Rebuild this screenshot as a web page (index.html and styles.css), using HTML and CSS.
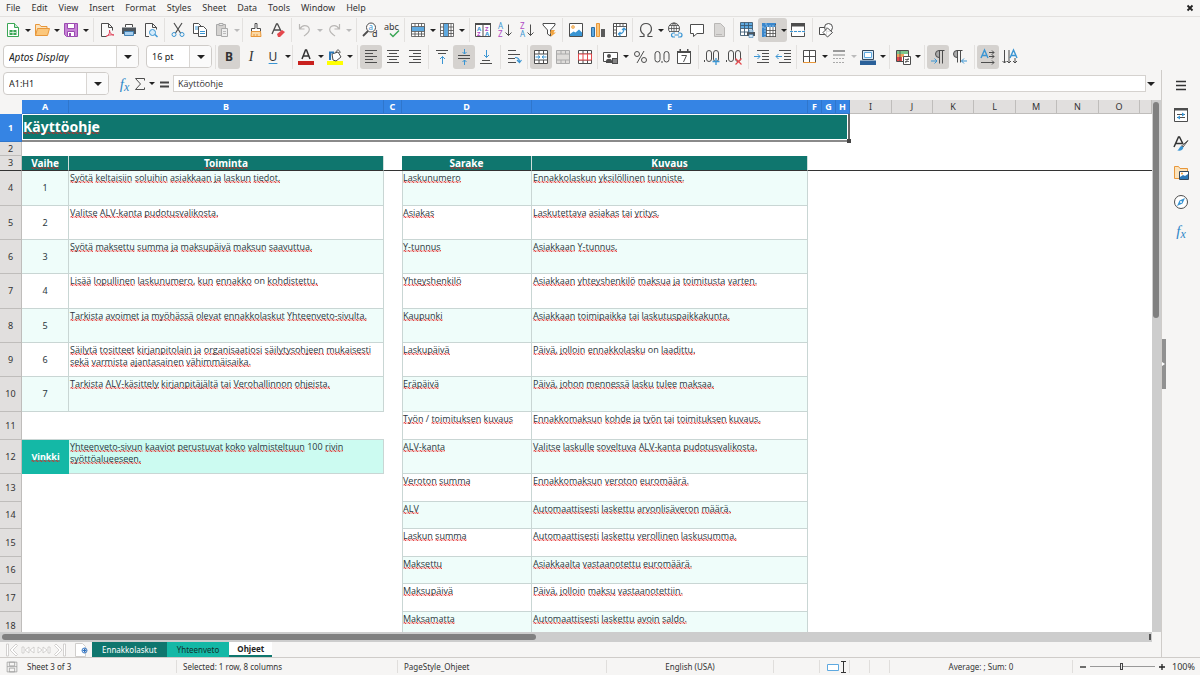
FILE: index.html
```html
<!DOCTYPE html>
<html lang="en">
<head>
<meta charset="utf-8">
<title>Ohjeet</title>
<link rel="stylesheet" href="styles.css">
</head>
<body>
<nav class="menubar">
  <button>File</button><button>Edit</button><button>View</button><button>Insert</button><button>Format</button><button>Styles</button><button>Sheet</button><button>Data</button><button>Tools</button><button>Window</button><button>Help</button>
  <button class="close" aria-label="Close document"><svg viewBox="0 0 8 8"><path d="M1.5 1.5l5 5M6.500 1.500l-5 5" stroke="#222" stroke-width="1.8"/></svg></button>
</nav>

<div class="toolbar standard" role="toolbar" aria-label="Standard">
  <div class="group">
    <button aria-label="New"><svg class="i" viewBox="0 0 16 16"><path d="M2.500 1.500h7l4 4v9h-11z" fill="#fff" stroke="#3aa655"/><path d="M9.500 1.500v4h4" fill="#c8ecd0" stroke="#3aa655"/><path d="M4.500 8h7v5h-7z" fill="#3aa655"/><path d="M5 10.500h6M8 8v5" stroke="#fff" stroke-width=".7"/></svg></button><button class="drop" aria-label="New options"></button>
    <button aria-label="Open"><svg class="i" viewBox="0 0 16 16"><path d="M1.500 13.500v-11h4l1.500 2h6v2" fill="#fbe3bd" stroke="#e8973a"/><path d="M1.500 13.500l2-7h12l-2 7z" fill="#fbc77c" stroke="#e8973a"/></svg></button><button class="drop" aria-label="Open options"></button>
    <button aria-label="Save"><svg class="i" viewBox="0 0 16 16"><path d="M1.500 1.500h13v13h-11l-2-2z" fill="#c783d6" stroke="#9b4bb0"/><path d="M4.500 1.500h7v5h-7zM4.500 9.500h7v5h-7z" fill="#fff" stroke="#9b4bb0"/><path d="M6 11h2v3H6z" fill="#9b4bb0"/></svg></button><button class="drop" aria-label="Save options"></button>
  </div>
  <div class="group">
    <button aria-label="Export as PDF"><svg class="i" viewBox="0 0 16 16"><path d="M7 14.500H2.500v-13h7l4 4v3M9.500 1.500v4h4" fill="#fafafa" stroke="#4d4d4d"/><path d="M7 14.500c3-1 4-4 3.500-6.500 0 3 2 5 4.500 5-3-.5-6 0-8 1.500z" fill="none" stroke="#e0455c"/></svg></button>
    <button aria-label="Print"><svg class="i" viewBox="0 0 16 16"><path d="M4.500 5V2.500h7V5" fill="#fff" stroke="#4d4d4d"/><path d="M1 5.500h14v6.500H1z" fill="#4d555c"/><path d="M3.500 9.500h9v4h-9z" fill="#a8d0f0" stroke="#4482b4"/></svg></button>
    <button aria-label="Print preview"><svg class="i" viewBox="0 0 16 16"><path d="M6 14.500H2.500v-13h7l4 4v2M9.500 1.500v4h4" fill="#fafafa" stroke="#4d4d4d"/><circle cx="9.500" cy="10.500" r="3" fill="#d5ebfa" stroke="#3a95d3"/><path d="M12 12.500l2.500 2.500" stroke="#3a95d3" stroke-width="1.400"/></svg></button>
  </div>
  <div class="group">
    <button aria-label="Cut"><svg class="i" viewBox="0 0 16 16"><path d="M4 1l6.500 10M12 1L5.500 11" fill="none" stroke="#4d4d4d" stroke-width="1.200"/><circle cx="4" cy="12.500" r="2" fill="none" stroke="#3a95d3"/><circle cx="12" cy="12.500" r="2" fill="none" stroke="#3a95d3"/></svg></button>
    <button aria-label="Copy"><svg class="i" viewBox="0 0 16 16"><path d="M1.500 1.500h5l3 3v7h-8z" fill="#fff" stroke="#4d4d4d"/><path d="M6.500 4.500h5l3 3v7h-8z" fill="#fff" stroke="#4d4d4d"/><path d="M3 5h3M3 7h3M8 9.500h5M8 11.500h5" stroke="#3a95d3"/></svg></button>
    <button class="off" disabled aria-label="Paste"><svg class="i" viewBox="0 0 16 16"><path d="M2.500 2.500h9v11h-9z" fill="#d4d2d0" stroke="#aaa"/><path d="M5 1.500h4v2H5z" fill="#eee" stroke="#aaa"/><path d="M7.500 6.500h6v8h-6z" fill="#eee" stroke="#aaa"/><path d="M9 9.500h3M9 11.500h3" stroke="#bbb"/></svg></button><button class="drop off" disabled aria-label="Paste options"></button>
  </div>
  <div class="group">
    <button aria-label="Clone formatting"><svg class="i" viewBox="0 0 16 16"><path d="M7 1.500h2v5h3.500v3h-9v-3H7z" fill="#fff" stroke="#4d4d4d"/><path d="M3.500 9.500h9l.5 5h-10z" fill="#fbd9a6" stroke="#e8973a"/><path d="M6 12v2M9 12v2" stroke="#e8973a"/></svg></button>
    <button aria-label="Clear formatting"><svg class="i" viewBox="0 0 16 16"><path d="M2 12L6.500 2h1L11 9M4 8h6" fill="none" stroke="#4d4d4d" stroke-width="1.300"/><path d="M7 12l5-4 3 2-5 5H8z" fill="#e5484d"/></svg></button>
  </div>
  <div class="group">
    <button class="off" disabled aria-label="Undo"><svg class="i" viewBox="0 0 16 16"><path d="M2.500 2v5h5M3 7c3-6 11-3 9 2-.7 2-2 2.500-5 5" fill="none" stroke="#b9b7b5" stroke-width="1.200"/></svg></button><button class="drop off" disabled aria-label="Undo options"></button>
    <button class="off" disabled aria-label="Redo"><svg class="i" viewBox="0 0 16 16"><path d="M13.500 2v5h-5M13 7C10 1 2 4 4 9c.7 2 2 2.500 5 5" fill="none" stroke="#b9b7b5" stroke-width="1.200"/></svg></button><button class="drop off" disabled aria-label="Redo options"></button>
  </div>
  <div class="group">
    <button aria-label="Find and replace"><svg class="i" viewBox="0 0 16 16"><circle cx="9" cy="5.500" r="4.500" fill="#fff" stroke="#4d4d4d"/><path d="M6 9l-5 5" stroke="#4d4d4d" stroke-width="1.800"/><text x="6.500" y="8" font-size="8" fill="#3a95d3">a</text><text x="10" y="15" font-size="9" fill="#333">d</text></svg></button>
    <button aria-label="Spelling"><svg class="i" viewBox="0 0 16 16"><text x="0" y="8" font-size="9" fill="#333">abc</text><path d="M6 11.500l3 3 6-6" fill="none" stroke="#3aa655" stroke-width="1.500"/></svg></button>
  </div>
  <div class="group">
    <button aria-label="Row"><svg class="i" viewBox="0 0 16 16"><path d="M1.500 1.500h13v13h-13z" fill="#fff"/><path d="M1 5h14v4H1z" fill="#5ea9e0"/><path d="M1.500 1.500h13v13h-13zM1.500 4.500h13M1.500 9.500h13M1.500 12h13M5 1.500v3M8.500 1.500v3M11.500 1.500v3M5 9.500v5M8.500 9.500v5M11.500 9.500v5" fill="none" stroke="#4d4d4d" stroke-width=".8"/></svg></button><button class="drop" aria-label="Row options"></button>
    <button aria-label="Column"><svg class="i" viewBox="0 0 16 16"><path d="M1.500 1.500h13v13h-13z" fill="#fff"/><path d="M5 1h4v14H5z" fill="#5ea9e0"/><path d="M1.500 1.500h13v13h-13zM4.500 1.500v13M9.500 1.500v13M12 1.500v13M1.500 5h3M1.500 8.500h3M1.500 11.500h3M9.500 5h5M9.500 8.500h5M9.500 11.500h5" fill="none" stroke="#4d4d4d" stroke-width=".8"/></svg></button><button class="drop" aria-label="Column options"></button>
  </div>
  <div class="group">
    <button aria-label="Sort"><svg class="i" viewBox="0 0 16 16"><path d="M.500 1.500h15v13H.500z" fill="#fff" stroke="#4d4d4d"/><path d="M0 1h16v2H0zM7.500 3h1v12h-1z" fill="#4d4d4d"/><g font-size="6" font-weight="bold"><text x="2" y="8.500" fill="#3a95d3">A</text><text x="2" y="14" fill="#b04bc4">Z</text><text x="10" y="8.500" fill="#b04bc4">Z</text><text x="10" y="14" fill="#3a95d3">A</text></g></svg></button>
    <button aria-label="Sort ascending"><svg class="i" viewBox="0 0 16 16"><text x="1" y="7" font-size="8" fill="#3a95d3">A</text><text x="1" y="15" font-size="8" fill="#b04bc4">Z</text><path d="M11.500 2.500v11M8.500 10.500l3 3 3-3" fill="none" stroke="#4d4d4d"/></svg></button>
    <button aria-label="Sort descending"><svg class="i" viewBox="0 0 16 16"><text x="1" y="7" font-size="8" fill="#b04bc4">Z</text><text x="1" y="15" font-size="8" fill="#3a95d3">A</text><path d="M11.500 2.500v11M8.500 10.500l3 3 3-3" fill="none" stroke="#4d4d4d"/></svg></button>
    <button aria-label="AutoFilter"><svg class="i" viewBox="0 0 16 16"><path d="M2 1.500h12v1.500L9.500 8v6l-3-2V8L2 3z" fill="#fff" stroke="#4d4d4d"/><path d="M10 8h4l-1.500 2.500H15L9.500 15l1-3.500H9z" fill="#f2a33c"/></svg></button>
  </div>
  <div class="group">
    <button aria-label="Image"><svg class="i" viewBox="0 0 16 16"><path d="M1.500 1.500h13v13h-13z" fill="#fff" stroke="#4d4d4d"/><circle cx="5" cy="5" r="1.500" fill="#fbc77c" stroke="#e8973a" stroke-width=".6"/><path d="M2 14v-2l3.500-2.500 2 1L11 7.500l3 3V14z" fill="#3a95d3"/></svg></button>
    <button aria-label="Chart"><svg class="i" viewBox="0 0 16 16"><path d="M1.500 5.500h3v9h-3z" fill="#5ea9e0" stroke="#2d6da3"/><path d="M6.500 1.500h3v13h-3z" fill="#fbc77c" stroke="#e8973a"/><path d="M11 7h4v8h-4z" fill="#5a5a5a"/></svg></button>
    <button aria-label="Pivot table"><svg class="i" viewBox="0 0 16 16"><path d="M1.500 1.500h13v13h-13z" fill="#fff" stroke="#4d4d4d"/><path d="M4.500 4.500v10M4.500 4.500h10M8 1.500v3M11 1.500v3M1.500 8h3M1.500 11h3M4.500 1.500v3M1.500 4.500h3" fill="none" stroke="#4d4d4d" stroke-width=".9"/><path d="M6.500 12c4 0 5.500-2 5.500-5.500M10 8l2-2 2 2M8.500 10l-2 2 2 2" fill="none" stroke="#3a95d3" stroke-width="1.200"/></svg></button>
  </div>
  <div class="group">
    <button aria-label="Special character"><svg class="i" viewBox="0 0 16 16"><path d="M1.500 14.500h4.500v-2C.500 9 2 1.500 8 1.500s7.500 7.500 2 11v2h4.500" fill="none" stroke="#4d4d4d" stroke-width="1.200"/></svg></button><button class="drop" aria-label="Special character options"></button>
    <button aria-label="Hyperlink"><svg class="i" viewBox="0 0 16 16"><circle cx="7" cy="6.500" r="5.500" fill="#fff" stroke="#4d4d4d"/><path d="M1.500 6.500h11M2.500 3.500h9M2.500 9.500h9M7 1v11" stroke="#4d4d4d" stroke-width=".8"/><ellipse cx="7" cy="6.500" rx="2.500" ry="5.500" fill="none" stroke="#4d4d4d" stroke-width=".8"/><rect x="3" y="10" width="13" height="6" fill="#f6f5f4"/><path d="M8 11H6.500a2 2 0 000 4H8M11 11h2a2 2 0 010 4h-2M7.500 13h4.500" fill="none" stroke="#3a95d3" stroke-width="1.200"/></svg></button>
    <button aria-label="Comment"><svg class="i" viewBox="0 0 16 16"><path d="M1.500 2.500h13v9H8l-3.500 3v-3h-3z" fill="#fff" stroke="#4d4d4d"/></svg></button>
    <button class="off" disabled aria-label="Headers and footers"><svg class="i" viewBox="0 0 16 16"><path d="M3.500 1.500h6l4 4v9h-10z" fill="#d9d7d5" stroke="#b9b7b5"/><path d="M5 12.500h6" stroke="#b9b7b5"/></svg></button>
  </div>
  <div class="group">
    <button aria-label="Print area"><svg class="i" viewBox="0 0 16 16"><path d="M1.500.500h12v13h-12z" fill="#fff"/><path d="M2 1h11v5H2z" fill="#5ea9e0"/><path d="M1.500.500h12v13h-12zM1.500 3.500h12M1.500 6.500h12M1.500 10h12M5.500.500v13M9.500.500v13" fill="none" stroke="#3c5a73" stroke-width=".9"/><path d="M8 10h8v4H8z" fill="#4d555c"/><path d="M10 8h4v2h-4zM10 12.500h4v3h-4z" fill="#cfe5f6" stroke="#4482b4" stroke-width=".6"/></svg></button>
    <span class="split on"><button aria-label="Freeze rows and columns"><svg class="i" viewBox="0 0 16 16"><path d="M1.500 1.500h13v13h-13z" fill="#fff"/><path d="M1 1h14v4H5.500v10H1z" fill="#3a87cc"/><path d="M5.500 5v10M9 5v10M12 5v10M5 8.500h10M5 11.500h10M5 14.500h10M14.500 2v13" stroke="#4d4d4d" stroke-width=".8"/><path d="M5 1v3h10M1 5h3v10" fill="none" stroke="#b7d9f3" stroke-width=".7" stroke-dasharray="2 1"/></svg></button><button class="drop" aria-label="Freeze options"></button></span>
    <button aria-label="Split window"><svg class="i" viewBox="0 0 16 16"><path d="M1.500 1.500h13v13h-13z" fill="#fff" stroke="#4d4d4d"/><path d="M1 1h14v3.500H1z" fill="#4d4d4d"/><path d="M0 9.500h16" stroke="#f6f5f4" stroke-width="2"/><path d="M0 9.500h16" stroke="#3a95d3" stroke-dasharray="3 1"/></svg></button>
  </div>
  <div class="group">
    <button aria-label="Show draw functions"><svg class="i" viewBox="0 0 16 16"><path d="M1.500 5.500h7v7h-7z" fill="#fff" stroke="#4d4d4d"/><circle cx="10.500" cy="5.500" r="4" fill="#fff" fill-opacity=".7" stroke="#4d4d4d"/><path d="M9.500 6l5 4.500-5 4.500L5 10.500z" fill="#fff" fill-opacity=".8" stroke="#4d4d4d"/></svg></button>
  </div>
</div>

<div class="toolbar formatting" role="toolbar" aria-label="Formatting">
  <div class="combos">
    <div class="combo font"><input type="text" value="Aptos Display" aria-label="Font name"><button class="drop" aria-label="Font list"></button></div>
    <div class="combo size"><input type="text" value="16 pt" aria-label="Font size"><button class="drop" aria-label="Size list"></button></div>
  </div>
  <div class="group">
    <button class="on letter bold">B</button><button class="letter italic">I</button><button class="letter under">U</button><button class="drop" aria-label="Underline options"></button>
  </div>
  <div class="group">
    <button aria-label="Font color"><svg class="i" viewBox="0 0 16 16"><path d="M4 10L7.500 1h1L12 10M5.500 7h5" fill="none" stroke="#333" stroke-width="1.500"/><path d="M0 12h16v4H0z" fill="#c9211e"/></svg></button><button class="drop" aria-label="Font color options"></button>
    <button aria-label="Highlighting color"><svg class="i" viewBox="0 0 16 16"><path d="M0 12h16v4H0z" fill="#ff0"/><path d="M5 5l6-2 3 5-5 4-3-1z" fill="#fff" stroke="#4d4d4d"/><path d="M9 4c0-4 4-4 4 0" fill="none" stroke="#4d4d4d"/><path d="M3 11V3.500H7" fill="none" stroke="#2d79b8" stroke-width="2"/></svg></button><button class="drop" aria-label="Highlighting options"></button>
  </div>
  <div class="group">
    <button class="on" aria-label="Align left"><svg class="i" viewBox="0 0 16 16"><path d="M2 1.500h12M2 4.500h8M2 7.500h12M2 10.500h8M2 13.500h12" stroke="#4d4d4d"/></svg></button>
    <button aria-label="Center horizontally"><svg class="i" viewBox="0 0 16 16"><path d="M2 1.500h12M4 4.500h8M2 7.500h12M4 10.500h8M2 13.500h12" stroke="#4d4d4d"/></svg></button>
    <button aria-label="Align right"><svg class="i" viewBox="0 0 16 16"><path d="M2 1.500h12M6 4.500h8M2 7.500h12M6 10.500h8M2 13.500h12" stroke="#4d4d4d"/></svg></button>
  </div>
  <div class="group">
    <button aria-label="Align top"><svg class="i" viewBox="0 0 16 16"><path d="M2 1.500h12M4 4.500h8" stroke="#4d4d4d"/><path d="M8.500 15V7.500M6 10l2.500-2.500L11 10" fill="none" stroke="#3a95d3"/></svg></button>
    <button class="on" aria-label="Center vertically"><svg class="i" viewBox="0 0 16 16"><path d="M2 6.500h12M2 9.500h12" stroke="#4d4d4d"/><path d="M8.500 0v5M6.500 3l2 2 2-2M8.500 16v-5M6.500 13l2-2 2 2" fill="none" stroke="#3a95d3"/></svg></button>
    <button aria-label="Align bottom"><svg class="i" viewBox="0 0 16 16"><path d="M4 11.500h8M2 14.500h12" stroke="#4d4d4d"/><path d="M8.500 1v7.500M6 6l2.500 2.500L11 6" fill="none" stroke="#3a95d3"/></svg></button>
  </div>
  <div class="group">
    <button aria-label="Wrap text"><svg class="i" viewBox="0 0 16 16"><path d="M2 1.500h8M2 5.500h12M2 9.500h7M2 13.500h8" stroke="#4d4d4d"/><path d="M9 8.500c3 0 4.500 1.500 4.500 4.500M11 11l2.500 2.500L15.500 11" fill="none" stroke="#3a95d3" stroke-width="1.200"/></svg></button>
  </div>
  <div class="group">
    <button class="on" aria-label="Merge and center cells"><svg class="i" viewBox="0 0 16 16"><path d="M1.500 1.500h13v13h-13z" fill="#fff" stroke="#4d4d4d"/><path d="M1.500 5h13M1.500 11h13M6 1.500V5M10.500 1.500V5M6 11v3.500M10.500 11v3.500" stroke="#4d4d4d"/><path d="M2.500 8h4.500M9 8h4.500M5 6.500L7 8 5 9.500M11 6.500L9 8l2 1.500" fill="none" stroke="#3a95d3"/></svg></button>
    <button class="off" disabled aria-label="Merge cells"><svg class="i" viewBox="0 0 16 16"><path d="M1.500 1.500h13v13h-13zM1.500 5h13M1.500 11h13M6 1.500V5M10.500 1.500V5M6 11v3.500M10.500 11v3.500" fill="#dedcda" stroke="#aaa"/></svg></button>
    <button aria-label="Unmerge cells"><svg class="i" viewBox="0 0 16 16"><path d="M1.500 1.500h13v13h-13zM1.500 5h13M1.500 11h13M6 1.500V5M10.500 1.500V5M6 11v3.500M10.500 11v3.500" fill="#fff" stroke="#4d4d4d"/><path d="M1.500 5h13v6h-13zM6 5v6M10.500 5v6" fill="#fff" stroke="#e5484d"/></svg></button>
  </div>
  <div class="group">
    <button aria-label="Format as currency"><svg class="i" viewBox="0 0 16 16"><path d="M.500 3.500h14v9H.500z" fill="#fff" stroke="#4d4d4d"/><circle cx="6" cy="7" r="2" fill="#4d4d4d"/><path d="M3 12c0-3 6-3 6 0v2H3zM9 9h6v6H9z" fill="#4d4d4d"/><path d="M10 11h4M10 13h4" stroke="#eee" stroke-width=".7"/></svg></button><button class="drop" aria-label="Currency options"></button>
    <button aria-label="Format as percent"><svg class="i" viewBox="0 0 16 16"><circle cx="5" cy="5" r="2.500" fill="none" stroke="#4d4d4d"/><circle cx="12" cy="11" r="2.500" fill="none" stroke="#4d4d4d"/><path d="M12 2L5 14" stroke="#4d4d4d"/></svg></button>
    <button aria-label="Format as number"><svg class="i" viewBox="0 0 16 16"><rect x="1" y="2.500" width="5" height="10.500" rx="2.500" fill="none" stroke="#4d4d4d"/><rect x="10" y="2.500" width="5" height="10.500" rx="2.500" fill="none" stroke="#4d4d4d"/><path d="M8 12v2" stroke="#4d4d4d"/></svg></button>
    <button aria-label="Format as date"><svg class="i" viewBox="0 0 16 16"><path d="M1.500 2.500h13v12h-13z" fill="#fff" stroke="#4d4d4d"/><path d="M1 2h14v2H1zM3.500 0h1.500v4H3.500zM11 0h1.500v4H11z" fill="#4d4d4d"/><path d="M5.500 6.500h5l-3 6.500" fill="none" stroke="#4d4d4d"/></svg></button>
  </div>
  <div class="group">
    <button aria-label="Add decimal place"><svg class="i" viewBox="0 0 16 16"><rect x="2.500" y="1.500" width="5" height="11" rx="2.500" fill="none" stroke="#4d4d4d"/><rect x="9.500" y="1.500" width="5" height="11" rx="2.500" fill="none" stroke="#4d4d4d"/><path d="M.500 11v2" stroke="#4d4d4d"/><path d="M12 9v7M8.500 12.500h7" stroke="#3a95d3" stroke-width="1.300"/></svg></button>
    <button aria-label="Delete decimal place"><svg class="i" viewBox="0 0 16 16"><rect x="2.500" y="1.500" width="5" height="11" rx="2.500" fill="none" stroke="#4d4d4d"/><rect x="9.500" y="1.500" width="5" height="11" rx="2.500" fill="none" stroke="#4d4d4d"/><path d="M.500 11v2" stroke="#4d4d4d"/><path d="M9.500 9.500l6 6M15.500 9.500l-6 6" stroke="#e5484d" stroke-width="1.200"/></svg></button>
  </div>
  <div class="group">
    <button aria-label="Increase indent"><svg class="i" viewBox="0 0 16 16"><path d="M3 1.500h12M8 4.500h7M8 7.500h7M8 10.500h7M3 13.500h12" stroke="#4d4d4d"/><path d="M0 7.500h6M3.500 5L6 7.500 3.500 10" fill="none" stroke="#3a95d3"/></svg></button>
    <button aria-label="Decrease indent"><svg class="i" viewBox="0 0 16 16"><path d="M3 1.500h12M8 4.500h7M8 7.500h7M8 10.500h7M3 13.500h12" stroke="#4d4d4d"/><path d="M6 7.500H0M2.500 5L0 7.500 2.500 10" fill="none" stroke="#3a95d3"/></svg></button>
  </div>
  <div class="group">
    <button aria-label="Borders"><svg class="i" viewBox="0 0 16 16"><path d="M1.500 1.500h12v12h-12z" fill="#fff" stroke="#4d4d4d"/><path d="M7.500 2v11M2 7.500h11" stroke="#4d4d4d"/><path d="M1 13.500h13" stroke="#e8973a"/></svg></button><button class="drop" aria-label="Borders options"></button>
    <button class="off" disabled aria-label="Border style"><svg class="i" viewBox="0 0 16 16"><path d="M2 2h12" stroke="#999" stroke-width="2"/><path d="M2 6h12" stroke="#aaa" stroke-width="1.500"/><path d="M2 9.500h12M2 13.500h12" stroke="#aaa" stroke-dasharray="2 1"/></svg></button><button class="drop off" disabled aria-label="Border style options"></button>
    <button aria-label="Border color"><svg class="i" viewBox="0 0 16 16"><path d="M2.500 1.500h11v9h-11z" fill="#d9ebf9" stroke="#34495e"/><path d="M4.500 3.500h7v5h-7z" fill="#fff" stroke="#5ea9e0"/><path d="M0 11.500h16V16H0z" fill="#2a6099"/></svg></button><button class="drop" aria-label="Border color options"></button>
  </div>
  <div class="group">
    <button aria-label="Conditional formatting"><svg class="i" viewBox="0 0 16 16"><path d="M1.500 1.500h12v11h-12z" fill="#fff" stroke="#4d4d4d"/><path d="M2 2h11v3H2z" fill="#7cc68d"/><path d="M2 5h7v3H2z" fill="#f0a35e"/><path d="M2 8h5v4H2z" fill="#e5484d"/><path d="M5 2v10" stroke="#4d4d4d" stroke-width=".8"/><path d="M8.500 7.500h7v8h-7z" fill="#fff" stroke="#4d4d4d"/><path d="M10 10.500h4M10 12.500h4M13.500 9l-3 5" stroke="#4d4d4d" stroke-width=".8"/></svg></button><button class="drop" aria-label="Conditional options"></button>
  </div>
  <div class="group">
    <button class="on" aria-label="Left-to-right"><svg class="i" viewBox="0 0 16 16"><path d="M9 1.500a3.500 3.500 0 000 7z" fill="#aaa"/><path d="M14.500 1.500H9a3.500 3.500 0 000 7M9.500 1.500v13M12.500 1.500v13" fill="none" stroke="#4d4d4d"/><path d="M1 12h6M4.500 9.500L7 12l-2.500 2.500" fill="none" stroke="#3a95d3"/></svg></button>
    <button aria-label="Right-to-left"><svg class="i" viewBox="0 0 16 16"><path d="M5 1.500a3.500 3.500 0 000 7z" fill="#aaa"/><path d="M10.500 1.500H5a3.500 3.500 0 000 7M5.500 1.500v12M8.500 1.500v12" fill="none" stroke="#4d4d4d"/><path d="M15 12H9.500M12 9.500L9.500 12l2.500 2.500" fill="none" stroke="#3a95d3"/></svg></button>
  </div>
  <div class="group">
    <button class="on" aria-label="Text direction left to right"><svg class="i" viewBox="0 0 16 16"><path d="M1 9L4.500 1 8 9M2 6.500h5" fill="none" stroke="#3a95d3" stroke-width="1.400"/><path d="M9 3.500h5M12 1.500l2 2-2 2M9 7.500h5M12 5.500l2 2-2 2M1 13.500h13M12 11.500l2 2-2 2" fill="none" stroke="#4d4d4d"/></svg></button>
    <button aria-label="Text direction top to bottom"><svg class="i" viewBox="0 0 16 16"><path d="M8 9l3.500-8L15 9M9 6.500h5" fill="none" stroke="#3a95d3" stroke-width="1.400"/><path d="M2.500 1v13M.500 12l2 2 2-2M7 1v13M5 12l2 2 2-2M13 9v5M11 12l2 2 2-2" fill="none" stroke="#4d4d4d"/></svg></button>
  </div>
</div>

<div class="workspace">
  <main class="document">
    <div class="formulabar">
      <div class="combo name"><input type="text" value="A1:H1" aria-label="Name box"><button class="drop" aria-label="Named ranges"></button></div>
      <div class="fxtools">
        <button class="fx" aria-label="Function wizard">f<sub>x</sub></button>
        <button aria-label="Select function"><svg class="i" viewBox="0 0 16 16"><path d="M12.500 4.500v-2h-9l5 5.500-5 5.500h9v-2" fill="none" stroke="#4d4d4d"/></svg></button><button class="drop" aria-label="Select function options"></button>
        <button aria-label="Formula"><svg class="i" viewBox="0 0 16 16"><path d="M4 6.500h9M4 10.500h9" stroke="#444" stroke-width="2"/></svg></button>
      </div>
      <input class="formula" type="text" value="Käyttöohje" aria-label="Input line">
      <button class="drop big" aria-label="Expand formula bar"></button>
    </div>

    <div class="gridarea">
      <div class="sheet">
        <table>
          <colgroup><col class="rh"><col class="a"><col class="b"><col class="c"><col class="d"><col class="e"><col class="s"><col class="s"><col class="s"><col class="w wide"><col class="w"><col class="w"><col class="w wide"><col class="w"><col class="w wide"><col class="w"><col></colgroup>
          <thead>
            <tr class="cols"><th class="corner"></th><th class="sel">A</th><th class="sel">B</th><th class="sel">C</th><th class="sel">D</th><th class="sel">E</th><th class="sel">F</th><th class="sel">G</th><th class="sel">H</th><th>I</th><th>J</th><th>K</th><th>L</th><th>M</th><th>N</th><th>O</th><th></th></tr>
          </thead>
          <tbody>
            <tr class="h28"><th class="sel">1</th><td class="title" colspan="8"><span class="spell">Käyttöohje</span><i class="handle"></i></td><td colspan="8"></td></tr>
            <tr class="h14"><th>2</th><td colspan="16"></td></tr>
            <tr class="h15 freeze"><th>3</th><td class="head spell">Vaihe</td><td class="head spell">Toiminta</td><td></td><td class="head spell">Sarake</td><td class="head spell">Kuvaus</td><td colspan="11"></td></tr>
            <tr class="h35 alt"><th>4</th><td class="num">1</td><td class="txt">Syötä keltaisiin soluihin asiakkaan ja laskun tiedot.</td><td></td><td class="txt first">Laskunumero</td><td class="txt">Ennakkolaskun yksilöllinen tunniste.</td></tr>
            <tr class="h34"><th>5</th><td class="num">2</td><td class="txt">Valitse ALV-kanta pudotusvalikosta.</td><td></td><td class="txt first">Asiakas</td><td class="txt">Laskutettava asiakas tai yritys.</td></tr>
            <tr class="h34 alt"><th>6</th><td class="num">3</td><td class="txt">Syötä maksettu summa ja maksupäivä maksun saavuttua.</td><td></td><td class="txt first">Y-tunnus</td><td class="txt">Asiakkaan Y-tunnus.</td></tr>
            <tr class="h35"><th>7</th><td class="num">4</td><td class="txt">Lisää lopullinen laskunumero, kun ennakko on kohdistettu.</td><td></td><td class="txt first">Yhteyshenkilö</td><td class="txt">Asiakkaan yhteyshenkilö maksua ja toimitusta varten.</td></tr>
            <tr class="h34 alt"><th>8</th><td class="num">5</td><td class="txt">Tarkista avoimet ja myöhässä olevat ennakkolaskut Yhteenveto-sivulta.</td><td></td><td class="txt first">Kaupunki</td><td class="txt">Asiakkaan toimipaikka tai laskutuspaikkakunta.</td></tr>
            <tr class="h34"><th>9</th><td class="num">6</td><td class="txt">Säilytä tositteet kirjanpitolain ja organisaatiosi säilytysohjeen mukaisesti sekä varmista ajantasainen vähimmäisaika.</td><td></td><td class="txt first">Laskupäivä</td><td class="txt">Päivä, jolloin ennakkolasku on laadittu.</td></tr>
            <tr class="h35 alt"><th>10</th><td class="num">7</td><td class="txt">Tarkista ALV-käsittely kirjanpitäjältä tai Verohallinnon ohjeista.</td><td></td><td class="txt first">Eräpäivä</td><td class="txt">Päivä, johon mennessä lasku tulee maksaa.</td></tr>
            <tr class="h28"><th>11</th><td class="over"></td><td class="over"></td><td></td><td class="txt first">Työn / toimituksen kuvaus</td><td class="txt">Ennakkomaksun kohde ja työn tai toimituksen kuvaus.</td></tr>
            <tr class="h34 alt"><th>12</th><td class="tip spell">Vinkki</td><td class="txt tiptext">Yhteenveto-sivun kaaviot perustuvat koko valmisteltuun 100 rivin syöttöalueeseen.</td><td></td><td class="txt first">ALV-kanta</td><td class="txt">Valitse laskulle soveltuva ALV-kanta pudotusvalikosta.</td></tr>
            <tr class="h28"><th>13</th><td colspan="3"></td><td class="txt first">Veroton summa</td><td class="txt">Ennakkomaksun veroton euromäärä.</td></tr>
            <tr class="h27 alt"><th>14</th><td colspan="3"></td><td class="txt first">ALV</td><td class="txt">Automaattisesti laskettu arvonlisäveron määrä.</td></tr>
            <tr class="h28"><th>15</th><td colspan="3"></td><td class="txt first">Laskun summa</td><td class="txt">Automaattisesti laskettu verollinen laskusumma.</td></tr>
            <tr class="h27 alt"><th>16</th><td colspan="3"></td><td class="txt first">Maksettu</td><td class="txt">Asiakkaalta vastaanotettu euromäärä.</td></tr>
            <tr class="h28"><th>17</th><td colspan="3"></td><td class="txt first">Maksupäivä</td><td class="txt">Päivä, jolloin maksu vastaanotettiin.</td></tr>
            <tr class="h28 alt"><th>18</th><td colspan="3"></td><td class="txt first">Maksamatta</td><td class="txt">Automaattisesti laskettu avoin saldo.</td></tr>
          </tbody>
        </table>
      </div>
      <div class="vscroll"><div class="vthumb"></div></div>
    </div>
    <div class="hscroll"><div class="hthumb"></div><div class="hgrip"></div></div>
    <div class="tabs">
      <div class="tabnav">
        <button aria-label="First sheet"><svg viewBox="0 0 14 14"><path d="M1.500 1h2v12h-2zM11 1L5 7l6 6 1.500-1.500L8 7l4.500-4.500z" fill="#fff" stroke="#c9c7c5" stroke-width=".8"/></svg></button>
        <button aria-label="Previous sheet"><svg viewBox="0 0 14 14"><path d="M1 4h2v6H1zM8 4L4 7l4 3zM13 4L9 7l4 3z" fill="#fff" stroke="#c9c7c5" stroke-width=".8"/></svg></button>
        <button aria-label="Next sheet"><svg viewBox="0 0 14 14"><path d="M13 4h-2v6h2zM6 4l4 3-4 3zM1 4l4 3-4 3z" fill="#fff" stroke="#c9c7c5" stroke-width=".8"/></svg></button>
        <button aria-label="Last sheet"><svg viewBox="0 0 14 14"><path d="M12.500 1h-2v12h2zM3 1l6 6-6 6-1.500-1.500L6 7 1.500 2.500z" fill="#fff" stroke="#c9c7c5" stroke-width=".8"/></svg></button>
      </div>
      <button class="add" aria-label="Add sheet"><svg viewBox="0 0 14 14"><path d="M1.500.500h7l3 3v10h-10z" fill="#fff" stroke="#d0cecc"/><path d="M10.500 5.500v4M8.500 7.500h4" stroke="#2a6fc0" stroke-width="1.200"/><circle cx="10.500" cy="7.500" r="2.500" fill="none" stroke="#2a6fc0" stroke-width=".9"/></svg></button>
      <button class="tab green">Ennakkolaskut</button><button class="tab teal">Yhteenveto</button><button class="tab current">Ohjeet</button>
    </div>
  </main>
  <aside class="sidebar">
    <button class="splitter" aria-label="Hide sidebar"></button>
    <button aria-label="Sidebar settings"><svg class="i" viewBox="0 0 16 16"><path d="M3 3.500h10M3 7.500h10M3 11.500h10" stroke="#333" stroke-width="1.600"/></svg></button>
    <button aria-label="Properties"><svg class="i" viewBox="0 0 16 16"><path d="M1.500 1.500h13v13h-13z" fill="#fff" stroke="#4d4d4d"/><path d="M1 1h14v2.500H1z" fill="#4d4d4d"/><path d="M4 7.500h8M4 10.500h8" stroke="#4d4d4d"/><path d="M9 5.500l3 2-3 2zM7 8.500l-3 2 3 2z" fill="#3a95d3"/></svg></button>
    <button aria-label="Styles"><svg class="i" viewBox="0 0 16 16"><path d="M1 11L5.500 1h1L10 8M3 7.500h6" fill="none" stroke="#333" stroke-width="1.500"/><path d="M15 4.500L10 11l-1.500-1z" fill="#fff" stroke="#4d4d4d"/><path d="M8.500 10l2 1.500c-1 3-3 3.500-6.500 3 2-.500 2.500-4 4.500-4.500z" fill="#3a95d3"/></svg></button>
    <button aria-label="Gallery"><svg class="i" viewBox="0 0 16 16"><path d="M1.500 13.500v-12h4l1.500 2h7.500v10z" fill="#fbe3bd" stroke="#e8973a"/><path d="M6.500 6.500h9v8h-9z" fill="#fff" stroke="#34495e"/><path d="M7 14v-2l3-2 2 1 3-2v5z" fill="#2d79b8"/><circle cx="9" cy="8.500" r="1" fill="#f2a33c"/></svg></button>
    <button aria-label="Navigator"><svg class="i" viewBox="0 0 16 16"><circle cx="8" cy="8" r="6.500" fill="#fff" stroke="#4d4d4d"/><path d="M12 4L9.500 9.500 4 12l2.500-5.500z" fill="#3a95d3"/><circle cx="8" cy="8" r="1" fill="#fff"/></svg></button>
    <button class="fx" aria-label="Functions">f<sub>x</sub></button>
  </aside>
</div>

<footer class="status">
  <div><svg class="i small" viewBox="0 0 16 16"><path d="M1.500 1.500h13v13h-13z" fill="#f6f5f4" stroke="#999"/><path d="M4.500 1.500h7v5h-7zM4.500 9.500h7v5h-7zM1.500 7.500h13" fill="none" stroke="#999"/></svg></div>
  <div>Sheet 3 of 3</div>
  <div class="bar">Selected: 1 row, 8 columns</div>
  <div class="bar">PageStyle_Ohjeet</div>
  <div class="bar mid">English (USA)</div>
  <div class="bar"></div>
  <div class="bar"><svg class="mode" viewBox="0 0 22 12"><path d="M1.500 3.500h11v6h-11z" fill="#fff" stroke="#5ea9e0"/><path d="M15 .500h5M17.500.500v11M15 11.500h5" stroke="#333"/></svg></div>
  <div class="bar"></div>
  <div class="bar"></div>
  <div class="bar mid">Average: ; Sum: 0</div>
  <div class="bar zoomer"><button aria-label="Zoom out"><svg viewBox="0 0 8 8"><path d="M1 4h6" stroke="#222" stroke-width="1.300"/></svg></button><input type="range" min="0" max="100" value="48" aria-label="Zoom"><button aria-label="Zoom in"><svg viewBox="0 0 8 8"><path d="M1 4h6M4 1v6" stroke="#222" stroke-width="1.300"/></svg></button></div>
  <div class="pct">100%</div>
</footer>
<script src="spell.js"></script>
</body>
</html>
```
FILE: styles.css
```css
* { box-sizing: border-box; }
body { margin: 0; height: 100vh; overflow: hidden; display: flex; flex-direction: column; background: #f6f5f4; color: #333; font-family: "Noto Sans", sans-serif; font-size: 9px; line-height: 12px; }
button, input { font: inherit; color: inherit; background: none; border: 0; padding: 0; margin: 0; border-radius: 0; outline: 0; }
svg { display: block; flex: none; overflow: visible; }
svg text { font-family: "Noto Sans", sans-serif; }
.i { width: 16px; height: 16px; }

.menubar { display: flex; align-items: center; gap: 11px; height: 17px; padding: 0 6px; border-bottom: 1px solid #e3e1df; flex: none; }
.menubar .close { margin-left: auto; }
.close svg { width: 8px; height: 8px; }

.toolbar { display: grid; height: 27px; align-items: center; flex: none; }
.standard { height: 26px; grid-template-columns: 93px 71px 78px 49px 65px 48px 65px 93px 70px 101px 79px 1fr; }
.formatting { grid-template-columns: 215px 77px 65px 71px 72px 27px 70px 101px 50px 48px 93px 35px 50px 1fr; }
.group { display: flex; align-items: center; height: 24px; padding-left: 2px; border-left: 1px solid #e3e1df; }
.standard .group:first-child { border-left: 0; }
.group button { width: 22px; height: 24px; display: flex; align-items: center; justify-content: center; border-radius: 3px; }
.split { display: flex; border-radius: 3px; }
.on, .group .on { background: #d5d2cf; }
.group .drop { width: 7px; }
.drop { display: flex; align-items: center; justify-content: center; flex: none; }
.drop::after { content: ""; border: 3px solid transparent; border-top-color: #222; border-bottom: 0; }
.drop.off::after { border-top-color: #bbb; }
.letter { font-size: 12px; line-height: 16px; }
.bold { font-weight: 700; }
.italic { font-family: "Liberation Serif", serif; font-style: italic; font-size: 14px; }
.under { text-decoration: underline; text-decoration-color: #3a95d3; text-underline-offset: 2px; }

.combos { display: flex; gap: 7px; padding-left: 3px; }
.combo { display: flex; height: 23px; border: 1px solid #cfccc9; border-radius: 4px; background: #fff; overflow: hidden; flex: none; }
.combo input { flex: 1; min-width: 0; padding-left: 5px; color: #222; }
.combo .drop { width: 22px; border-left: 1px solid #d9d6d3; background: #fafafa; }
.combo .drop::after, .big::after { border-width: 4px 4px 0; }
.font { width: 136px; }
.font input { font-style: italic; font-size: 10px; }
.size { width: 66px; }
.name { width: 106px; }

.workspace { display: flex; flex: 1; min-height: 0; }
.document { display: flex; flex-direction: column; flex: 1; min-width: 0; }
.formulabar { display: flex; align-items: center; height: 30px; padding: 0 5px 3px 3px; flex: none; }
.fxtools { display: flex; align-items: center; padding-left: 8px; width: 64px; }
.fxtools .drop { width: 8px; }
.fx { width: 15px; color: #2d86c8; font-family: "Liberation Serif", serif; font-style: italic; font-size: 15px; line-height: 16px; }
.fx sub { font-size: 12px; line-height: 1px; vertical-align: -2px; }
.formula { flex: 1; min-width: 0; height: 17px; padding-left: 4px; background: #fff; border: 1px solid #d5d2cf; font-family: "Open Sans", sans-serif; }
.big { width: 10px; }

.gridarea { display: flex; flex: 1; min-height: 0; background: #fff; }
.sheet { flex: 1; min-width: 0; overflow: hidden; }
table { width: 100%; table-layout: fixed; border-collapse: separate; border-spacing: 0; }
.rh { width: 22px; } .a { width: 47px; } .b { width: 315px; } .c { width: 18px; } .d { width: 130px; } .e { width: 276px; } .s { width: 14px; } .w { width: 41px; } .wide { width: 42px; }
th { padding: 0; font-weight: 400; background: #e1dfde; border-right: 1px solid #bfbdbb; border-bottom: 1px solid #bfbdbb; }
th.sel { background: #3584e4; color: #fff; font-weight: 700; border-color: #2f76cc; }
th.corner { background: #f6f5f4; border-color: #f6f5f4; }
.cols { height: 14px; line-height: 12px; }
td { padding: 0; }
.h14 { height: 14px; } .h15 { height: 15px; } .h27 { height: 27px; } .h28 { height: 28px; } .h34 { height: 34px; } .h35 { height: 35px; }
.title { position: relative; padding-left: 1px; background: #0f766e; color: #fff; font-size: 14px; line-height: 20px; font-weight: 700; border-right: 2px solid #666; border-bottom: 2px solid #8a8a8a; box-shadow: inset 0 0 0 1px #fff; }
.handle { position: absolute; right: -3px; bottom: -3px; width: 4px; height: 4px; background: #444; }
.head { background: #0f766e; color: #fff; font-weight: 700; text-align: center; font-size: 10px; line-height: 13px; border-right: 1px solid #cfdedb; }
.freeze > * { border-bottom: 1px solid #333; }
.num, .txt { border-right: 1px solid #c9d6d4; border-bottom: 1px solid #c9d6d4; color: #2b3840; }
.first { border-left: 1px solid #c9d6d4; }
.num { text-align: center; }
.txt { vertical-align: top; padding: 1px 0 0 1px; font-family: "Open Sans", sans-serif; }
.txt.first { padding-left: 0; }
.alt .num, .alt .txt { background: #effdfa; }
.over { border-bottom: 1px solid #c9d6d4; }
.alt .tip { background: #14b8a6; color: #fff; font-weight: 700; text-align: center; }
.alt .tiptext { background: #ccfbf1; }
.mark { background: url("data:image/svg+xml,%3Csvg xmlns='http://www.w3.org/2000/svg' width='4' height='2'%3E%3Cpath d='M0 1.500L1 .500 3 1.500 4 .500' fill='none' stroke='%23e02020' stroke-width='1'/%3E%3C/svg%3E") repeat-x left 0 bottom 1px; }
.title .mark { background-position: left 0 bottom 2px; }

.vscroll { width: 9px; padding: 2px 1px; background: #cdcdcd; flex: none; }
.vthumb { width: 6px; height: 41%; border-radius: 3px; background: #808080; }
.hscroll { display: flex; justify-content: space-between; height: 10px; margin-right: 9px; padding: 2px 1px 2px 2px; background: #cdcdcd; flex: none; }
.hthumb { width: 534px; max-width: 80%; border-radius: 3px; background: #808080; }
.hgrip { width: 2px; background: #555; }
.tabs { display: flex; height: 15px; font-size: 8px; flex: none; }
.tabnav { display: flex; align-items: center; width: 74px; padding-left: 5px; gap: 2px; }
.tabnav svg, .add svg { width: 14px; height: 14px; }
.add { width: 18px; }
.tab { padding: 0 10px; }
.green { background: #0f766e; color: #fff; }
.teal { background: #14b8a6; color: #12302d; }
.current { background: #fff; color: #222; font-weight: 700; padding: 0 8px; border-bottom: 2px solid #0f766e; }

.sidebar { position: relative; width: 39px; border-left: 1px solid #cfccc9; display: flex; flex-direction: column; align-items: center; gap: 13px; padding-top: 8px; flex: none; }
.sidebar button { flex: none; height: 16px; }
.sidebar .splitter { position: absolute; left: 0; top: 269px; width: 4px; height: 50px; background: #919191; }
.splitter::after { content: ""; display: block; border: 2px solid transparent; border-left: 3px solid #fff; border-right: 0; }

.status { display: grid; grid-template-columns: 21px 155px 221px 209px 167px 46px 30px 20px 20px 1fr 97px 31px; align-items: center; height: 18px; border-top: 1px solid #cfccc9; font-size: 8px; flex: none; }
.status > div { display: flex; align-items: center; height: 13px; padding-left: 6px; white-space: nowrap; }
.status .bar { border-left: 1px solid #e0dedc; }
.status .mid { justify-content: center; padding: 0; }
.small { width: 12px; height: 12px; }
.mode { width: 22px; height: 12px; }
.zoomer svg { width: 8px; height: 8px; }
.zoomer input { appearance: none; width: 65px; height: 11px; margin: 0 3px; background: linear-gradient(#999, #999) center / 100% 1px no-repeat; }
.zoomer input::-webkit-slider-thumb { appearance: none; width: 3px; height: 7px; background: #eee; border: 1px solid #444; }
.status .pct { font-size: 9px; padding-left: 3px; }
```
FILE: spell.js
```js
// Underline every word the dictionary does not know.
const known = new Set(["on", "/", "100"]);
document.querySelectorAll(".txt, .spell").forEach(function (cell) {
  const words = cell.textContent.split(" ");
  cell.textContent = "";
  words.forEach(function (word, n) {
    if (n) cell.append(" ");
    if (known.has(word)) { cell.append(word); return; }
    const mark = document.createElement("span");
    mark.className = "mark";
    mark.textContent = word;
    cell.append(mark);
  });
});
```
